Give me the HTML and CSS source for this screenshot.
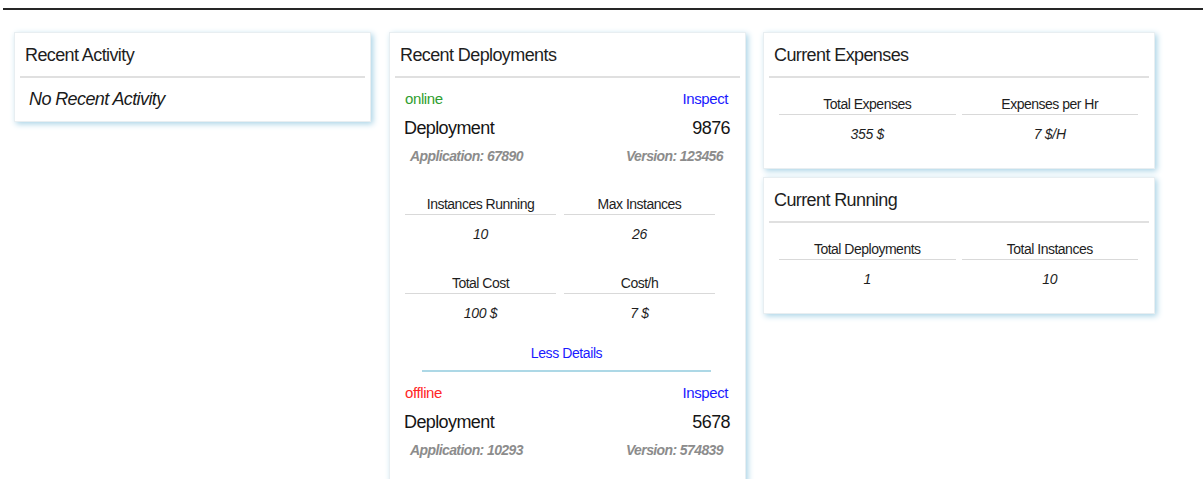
FILE: index.html
```html
<!DOCTYPE html>
<html lang="en">
<head>
<meta charset="utf-8">
<title>Dashboard</title>
<link rel="stylesheet" href="styles.css">
</head>
<body>
  <div class="topbar"></div>

  <main class="board">
    <section class="card">
      <header class="card-title">Recent Activity</header>
      <div class="card-body activity">
        <em class="empty">No Recent Activity</em>
      </div>
    </section>

    <section class="card deployments">
      <header class="card-title">Recent Deployments</header>
      <div class="card-body">
        <article class="deploy">
          <div class="row status-row">
            <span class="status online">online</span>
            <a class="inspect" href="#">Inspect</a>
          </div>
          <div class="row name-row">
            <span>Deployment</span>
            <span>9876</span>
          </div>
          <div class="row meta-row">
            <span>Application: 67890</span>
            <span>Version: 123456</span>
          </div>
          <div class="stats deploy-stats">
            <div class="stat">
              <div class="stat-label">Instances Running</div>
              <div class="stat-value">10</div>
            </div>
            <div class="stat">
              <div class="stat-label">Max Instances</div>
              <div class="stat-value">26</div>
            </div>
            <div class="stat">
              <div class="stat-label">Total Cost</div>
              <div class="stat-value">100 $</div>
            </div>
            <div class="stat">
              <div class="stat-label">Cost/h</div>
              <div class="stat-value">7 $</div>
            </div>
          </div>
          <a class="toggle" href="#">Less Details</a>
        </article>

        <article class="deploy">
          <div class="row status-row">
            <span class="status offline">offline</span>
            <a class="inspect" href="#">Inspect</a>
          </div>
          <div class="row name-row">
            <span>Deployment</span>
            <span>5678</span>
          </div>
          <div class="row meta-row">
            <span>Application: 10293</span>
            <span>Version: 574839</span>
          </div>
        </article>
      </div>
    </section>

    <div class="column">
      <section class="card">
        <header class="card-title">Current Expenses</header>
        <div class="card-body summary">
          <div class="stats">
            <div class="stat">
              <div class="stat-label">Total Expenses</div>
              <div class="stat-value">355 $</div>
            </div>
            <div class="stat">
              <div class="stat-label">Expenses per Hr</div>
              <div class="stat-value">7 $/H</div>
            </div>
          </div>
        </div>
      </section>

      <section class="card">
        <header class="card-title">Current Running</header>
        <div class="card-body summary">
          <div class="stats">
            <div class="stat">
              <div class="stat-label">Total Deployments</div>
              <div class="stat-value">1</div>
            </div>
            <div class="stat">
              <div class="stat-label">Total Instances</div>
              <div class="stat-value">10</div>
            </div>
          </div>
        </div>
      </section>
    </div>
  </main>
</body>
</html>
```

FILE: styles.css
```css
* {
  box-sizing: border-box;
}

html, body {
  margin: 0;
  padding: 0;
  background: #ffffff;
}

body {
  font-family: "Liberation Sans", Arial, sans-serif;
  color: #1c1c1c;
  overflow: hidden;
}

a {
  text-decoration: none;
}

/* thin rule under the (empty) navigation bar */
.topbar {
  margin: 8px 0 0 3px;
  border-top: 2px solid #262626;
}

.board {
  display: flex;
  align-items: flex-start;
  gap: 18px;
  padding: 22px 0 0 14px;
}

.card {
  background: #ffffff;
  border: 1px solid #e8eef1;
  box-shadow: 2px 2px 6px #a9d3e6;
}

.board > .card {
  width: 357px;
}

.column {
  width: 392px;
  margin-left: -1px;
  display: flex;
  flex-direction: column;
  gap: 8px;
}

.card-title {
  margin: 0 5px;
  padding: 11px 5px 10px;
  line-height: 22px;
  font-size: 18px;
  letter-spacing: -0.6px;
  color: #1e1e1e;
  border-bottom: 2px solid #e0e0e0;
}

/* recent activity */
.activity {
  padding: 10px 14px;
  line-height: 22px;
}

.empty {
  font-size: 18px;
  letter-spacing: -0.6px;
  color: #1a1a1a;
}

/* deployments list */
.deployments .card-body {
  padding: 0 15px 30px 14px;
}

.deploy {
  padding-top: 8px;
}

.row {
  display: flex;
  justify-content: space-between;
  align-items: center;
}

.status-row {
  height: 24px;
  padding-left: 1px;
  font-size: 15px;
  letter-spacing: -0.4px;
}

.status.online {
  color: #2f9e2f;
}

.status.offline {
  color: #ff2626;
}

.inspect {
  color: #1a1aff;
  padding-right: 2px;
}

.name-row {
  height: 36px;
  font-size: 18px;
  letter-spacing: -0.6px;
  color: #151515;
}

.meta-row {
  height: 20px;
  padding: 0 7px 0 6px;
  font-size: 14px;
  letter-spacing: -0.6px;
  font-weight: bold;
  font-style: italic;
  color: #8c8c8c;
}

/* label / value pairs */
.stats {
  display: grid;
  grid-template-columns: 1fr 1fr;
}

.deploy-stats {
  margin: 28px 15px 0 1px;
  column-gap: 8px;
  row-gap: 29px;
}

.stat {
  text-align: center;
}

.stat-label {
  line-height: 20px;
  font-size: 14px;
  letter-spacing: -0.5px;
  color: #1e1e1e;
  border-bottom: 1px solid #d9d9d9;
}

.stat-value {
  padding-top: 9px;
  line-height: 20px;
  font-size: 14px;
  font-style: italic;
  letter-spacing: -0.3px;
  color: #1e1e1e;
}

.toggle {
  display: block;
  margin: 20px 19px 0 18px;
  padding-bottom: 7px;
  line-height: 20px;
  font-size: 14px;
  letter-spacing: -0.4px;
  text-align: center;
  color: #1a1aff;
  border-bottom: 2px solid #add8e6;
}

/* summary cards on the right */
.summary {
  padding: 16px 16px 24px 15px;
}

.summary .stats {
  column-gap: 6px;
}
```
